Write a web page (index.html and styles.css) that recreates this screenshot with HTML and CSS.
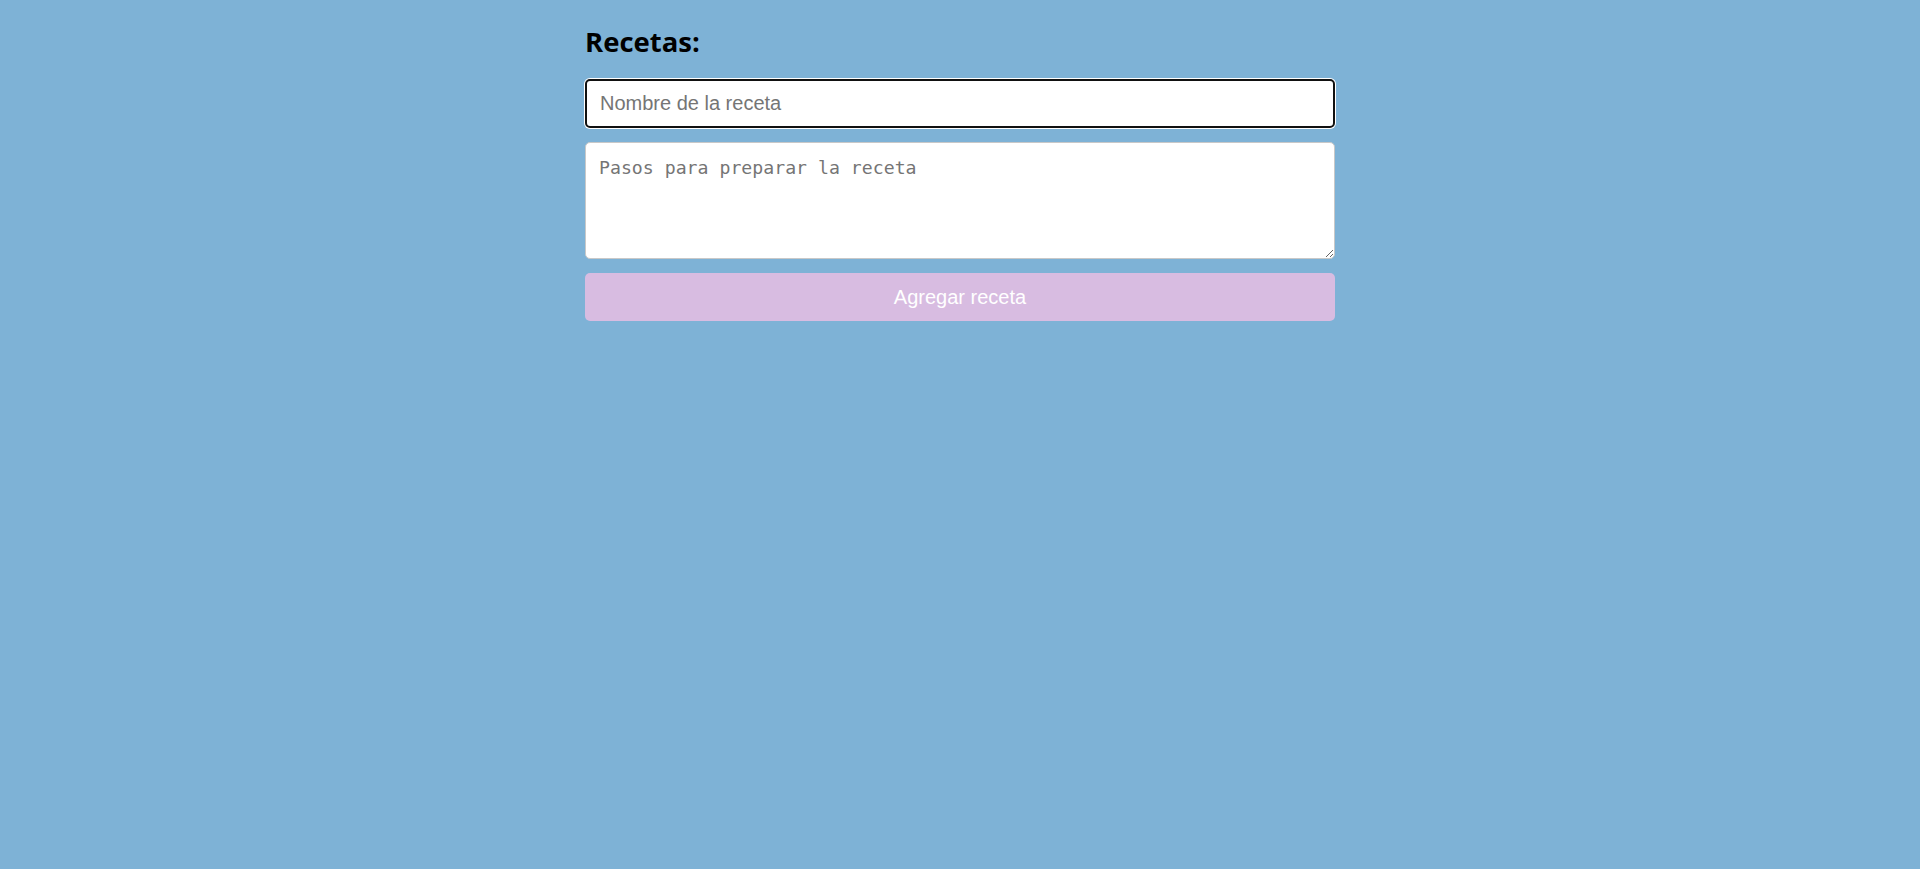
FILE: index.html
```html
<!DOCTYPE html>
<html lang="es">
<head>
<meta charset="utf-8">
<title>Recetas</title>
<link rel="stylesheet" href="styles.css">
</head>
<body>
<main class="container">
  <h2 class="title">Recetas:</h2>
  <form class="form">
    <input class="field name" type="text" placeholder="Nombre de la receta">
    <textarea class="field steps" placeholder="Pasos para preparar la receta"></textarea>
    <button class="add" type="button">Agregar receta</button>
  </form>
</main>
</body>
</html>
```
FILE: styles.css
```css
html, body {
  margin: 0;
  padding: 0;
  background: #7eb2d6;
  height: 100%;
}
.container {
  width: 750px;
  margin: 0 auto;
  padding-top: 24px;
}
.title {
  margin: 0;
  font-family: "Open Sans", "Noto Sans", sans-serif;
  font-weight: 700;
  font-size: 27.5px;
  line-height: 36px;
  color: #000;
}
.form {
  display: flex;
  flex-direction: column;
  margin-top: 19px;
}
.field {
  box-sizing: border-box;
  width: 100%;
  background: #fff;
  border: 1px solid #c8c8c8;
  border-radius: 5px;
  padding: 0 13px;
  margin: 0;
}
.name {
  height: 49px;
  font-family: "Liberation Sans", Arial, sans-serif;
  font-size: 20px;
  border: 2px solid #111;
  box-shadow: 0 0 0 1px #fff;
  outline: none;
}
.name::placeholder { color: #757575; }
.steps {
  margin-top: 14px;
  height: 117px;
  padding-top: 14px;
  font-family: "DejaVu Sans Mono", "Liberation Mono", monospace;
  font-size: 18.2px;
  line-height: 22px;
  resize: vertical;
  outline: none;
}
.steps::placeholder { color: #757575; }
.add {
  margin-top: 14px;
  height: 48px;
  border: none;
  border-radius: 5px;
  background: #d8bce1;
  color: #fff;
  font-family: "Liberation Sans", Arial, sans-serif;
  font-size: 20px;
  cursor: pointer;
}
```
